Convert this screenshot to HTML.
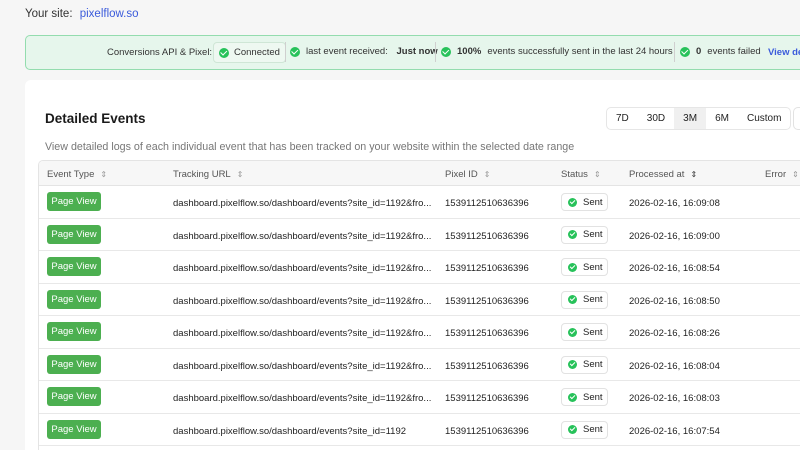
<!DOCTYPE html>
<html style="height:450px;overflow:hidden"><head><style>
*{box-sizing:border-box;margin:0;padding:0}
body{width:800px;height:450px;overflow:hidden;background:#f6f6f6;font-family:"Liberation Sans",sans-serif;color:#222;position:relative}
.abs{position:absolute;white-space:nowrap}
.site{left:25px;top:8px;font-size:11.5px;color:#333}
.site a{color:#3b5bdb;text-decoration:none;margin-left:4px}
.banner{left:25px;top:35px;width:775px;height:35px;background:#e6f6ec;border:1.5px solid #93dcae;border-right:none;border-radius:5px 0 0 5px;font-size:9.5px;color:#333;overflow:hidden}
.banner .abs{top:11px}
.banner .fx{top:10px;display:flex;align-items:center;gap:6px}
.ck{display:inline-block;width:10px;height:10px;border-radius:50%;background:#27c25a;position:relative;flex:none}
.ck:after{content:"";position:absolute;left:3.3px;top:1.6px;width:2.5px;height:4.5px;border:solid #fff;border-width:0 1.4px 1.4px 0;transform:rotate(45deg)}
.card{left:25px;top:80px;width:775px;height:370px;background:#fff;border-radius:6px 0 0 0}
.h{left:45px;top:111px;font-size:13.5px;font-weight:bold;color:#1a1a1a}
.sub{left:45px;top:141px;font-size:10.7px;color:#777}
.rng{left:606px;top:107px;height:23px;border:1px solid #e6e6e6;border-radius:5px;display:flex;font-size:10px;background:#fff;overflow:hidden}
.rng span{padding:0 9px;line-height:21px}
.rng .on{background:#f0f0f0}
.tbl{left:38px;top:160px;width:762px;height:290px;border:1px solid #e4e4e4;border-right:none;border-bottom:none;border-radius:5px 0 0 0;background:#fff;overflow:hidden}
.th{position:absolute;left:0;top:0;width:100%;height:25px;background:#f7f7f7;border-bottom:1px solid #e4e4e4}
.t{position:absolute;font-size:9.5px;white-space:nowrap}
.hd{color:#555;top:8px}
.s{color:#999;font-size:8px;margin-left:6px}
.row{position:absolute;left:0;width:100%;height:32.5px;border-bottom:1px solid #e8e8e8}
.pv{position:absolute;left:8px;top:6px;width:54px;height:19px;background:#4caf50;border-radius:3px;color:#fff;font-size:9.5px;text-align:center;line-height:19px}
.sent{position:absolute;left:522px;top:7px;width:47px;height:18px;border:1px solid #e2e2e2;border-radius:4px;font-size:9.5px;display:flex;align-items:center;padding-left:6px;gap:6px}
.sent .ck{width:9px;height:9px}
.sent .ck:after{left:2.8px;top:1.2px;width:2.3px;height:4px}
.rt{top:12px}
</style></head><body>
<div class="abs site">Your site: <a>pixelflow.so</a></div>
<div class="abs banner">
 <span class="abs" style="left:81px">Conversions API &amp; Pixel:</span>
 <span class="abs" style="left:187px;top:6px;height:21px;border:1px solid #cfe6d6;border-radius:4px;padding:0 5px;background:#eef8f1;display:flex;align-items:center;gap:5px"><span class="ck"></span>Connected</span>
 <span class="abs" style="left:259px;top:6px;width:1px;height:20px;background:#cfcfcf"></span>
 <span class="abs fx" style="left:264px"><span class="ck"></span>last event received:&nbsp;<b>Just now</b></span>
 <span class="abs" style="left:409px;top:6px;width:1px;height:20px;background:#cfcfcf"></span>
 <span class="abs fx" style="left:415px"><span class="ck"></span><b>100%</b>events successfully sent in the last 24 hours</span>
 <span class="abs" style="left:648px;top:6px;width:1px;height:20px;background:#cfcfcf"></span>
 <span class="abs fx" style="left:654px"><span class="ck"></span><b>0</b>events failed</span>
 <span class="abs" style="left:742px;color:#3b5bdb;font-weight:bold">View de</span>
</div>
<div class="abs card"></div>
<div class="abs h">Detailed Events</div>
<div class="abs sub">View detailed logs of each individual event that has been tracked on your website within the selected date range</div>
<div class="abs rng"><span>7D</span><span>30D</span><span class="on">3M</span><span>6M</span><span>Custom</span></div>
<div class="abs" style="left:793px;top:107px;width:20px;height:23px;border:1px solid #e2e2e2;border-radius:5px"></div>
<div class="abs tbl">
 <div class="th">
  <span class="t hd" style="left:8px">Event Type<span class="s">⇕</span></span>
  <span class="t hd" style="left:134px">Tracking URL<span class="s">⇕</span></span>
  <span class="t hd" style="left:406px">Pixel ID<span class="s">⇕</span></span>
  <span class="t hd" style="left:522px">Status<span class="s">⇕</span></span>
  <span class="t hd" style="left:590px">Processed at<span class="s" style="color:#333">⇕</span></span>
  <span class="t hd" style="left:726px">Error<span class="s">⇕</span></span>
 </div>
 <div class="row" style="top:25px"><div class="pv">Page View</div><span class="t rt" style="left:134px">dashboard.pixelflow.so/dashboard/events?site_id=1192&amp;fro...</span><span class="t rt" style="left:406px">1539112510636396</span><div class="sent"><span class="ck"></span>Sent</div><span class="t rt" style="left:590px">2026-02-16, 16:09:08</span></div>
 <div class="row" style="top:57.5px"><div class="pv">Page View</div><span class="t rt" style="left:134px">dashboard.pixelflow.so/dashboard/events?site_id=1192&amp;fro...</span><span class="t rt" style="left:406px">1539112510636396</span><div class="sent"><span class="ck"></span>Sent</div><span class="t rt" style="left:590px">2026-02-16, 16:09:00</span></div>
 <div class="row" style="top:90px"><div class="pv">Page View</div><span class="t rt" style="left:134px">dashboard.pixelflow.so/dashboard/events?site_id=1192&amp;fro...</span><span class="t rt" style="left:406px">1539112510636396</span><div class="sent"><span class="ck"></span>Sent</div><span class="t rt" style="left:590px">2026-02-16, 16:08:54</span></div>
 <div class="row" style="top:122.5px"><div class="pv">Page View</div><span class="t rt" style="left:134px">dashboard.pixelflow.so/dashboard/events?site_id=1192&amp;fro...</span><span class="t rt" style="left:406px">1539112510636396</span><div class="sent"><span class="ck"></span>Sent</div><span class="t rt" style="left:590px">2026-02-16, 16:08:50</span></div>
 <div class="row" style="top:155px"><div class="pv">Page View</div><span class="t rt" style="left:134px">dashboard.pixelflow.so/dashboard/events?site_id=1192&amp;fro...</span><span class="t rt" style="left:406px">1539112510636396</span><div class="sent"><span class="ck"></span>Sent</div><span class="t rt" style="left:590px">2026-02-16, 16:08:26</span></div>
 <div class="row" style="top:187.5px"><div class="pv">Page View</div><span class="t rt" style="left:134px">dashboard.pixelflow.so/dashboard/events?site_id=1192&amp;fro...</span><span class="t rt" style="left:406px">1539112510636396</span><div class="sent"><span class="ck"></span>Sent</div><span class="t rt" style="left:590px">2026-02-16, 16:08:04</span></div>
 <div class="row" style="top:220px"><div class="pv">Page View</div><span class="t rt" style="left:134px">dashboard.pixelflow.so/dashboard/events?site_id=1192&amp;fro...</span><span class="t rt" style="left:406px">1539112510636396</span><div class="sent"><span class="ck"></span>Sent</div><span class="t rt" style="left:590px">2026-02-16, 16:08:03</span></div>
 <div class="row" style="top:252.5px"><div class="pv">Page View</div><span class="t rt" style="left:134px">dashboard.pixelflow.so/dashboard/events?site_id=1192</span><span class="t rt" style="left:406px">1539112510636396</span><div class="sent"><span class="ck"></span>Sent</div><span class="t rt" style="left:590px">2026-02-16, 16:07:54</span></div>
</div>
</body></html>
